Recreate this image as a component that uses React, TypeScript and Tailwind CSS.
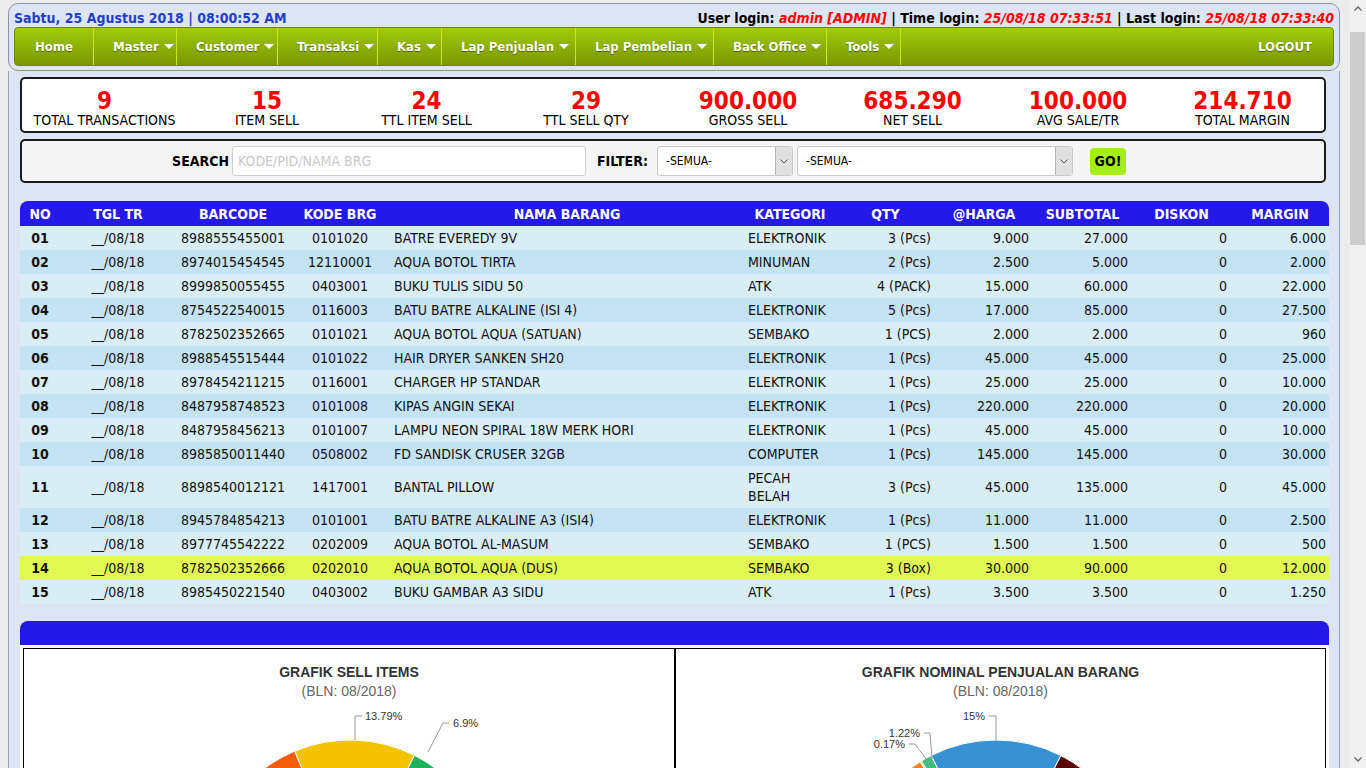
import React from 'react';

const rows: string[][] = [
  ['01', '8988555455001', '0101020', 'BATRE EVEREDY 9V', 'ELEKTRONIK', '3 (Pcs)', '9.000', '27.000', '0', '6.000'],
  ['02', '8974015454545', '12110001', 'AQUA BOTOL TIRTA', 'MINUMAN', '2 (Pcs)', '2.500', '5.000', '0', '2.000'],
  ['03', '8999850055455', '0403001', 'BUKU TULIS SIDU 50', 'ATK', '4 (PACK)', '15.000', '60.000', '0', '22.000'],
  ['04', '8754522540015', '0116003', 'BATU BATRE ALKALINE (ISI 4)', 'ELEKTRONIK', '5 (Pcs)', '17.000', '85.000', '0', '27.500'],
  ['05', '8782502352665', '0101021', 'AQUA BOTOL AQUA (SATUAN)', 'SEMBAKO', '1 (PCS)', '2.000', '2.000', '0', '960'],
  ['06', '8988545515444', '0101022', 'HAIR DRYER SANKEN SH20', 'ELEKTRONIK', '1 (Pcs)', '45.000', '45.000', '0', '25.000'],
  ['07', '8978454211215', '0116001', 'CHARGER HP STANDAR', 'ELEKTRONIK', '1 (Pcs)', '25.000', '25.000', '0', '10.000'],
  ['08', '8487958748523', '0101008', 'KIPAS ANGIN SEKAI', 'ELEKTRONIK', '1 (Pcs)', '220.000', '220.000', '0', '20.000'],
  ['09', '8487958456213', '0101007', 'LAMPU NEON SPIRAL 18W MERK HORI', 'ELEKTRONIK', '1 (Pcs)', '45.000', '45.000', '0', '10.000'],
  ['10', '8985850011440', '0508002', 'FD SANDISK CRUSER 32GB', 'COMPUTER', '1 (Pcs)', '145.000', '145.000', '0', '30.000'],
  ['11', '8898540012121', '1417001', 'BANTAL PILLOW', 'PECAH BELAH', '3 (Pcs)', '45.000', '135.000', '0', '45.000'],
  ['12', '8945784854213', '0101001', 'BATU BATRE ALKALINE A3 (ISI4)', 'ELEKTRONIK', '1 (Pcs)', '11.000', '11.000', '0', '2.500'],
  ['13', '8977745542222', '0202009', 'AQUA BOTOL AL-MASUM', 'SEMBAKO', '1 (PCS)', '1.500', '1.500', '0', '500'],
  ['14', '8782502352666', '0202010', 'AQUA BOTOL AQUA (DUS)', 'SEMBAKO', '3 (Box)', '30.000', '90.000', '0', '12.000'],
  ['15', '8985450221540', '0403002', 'BUKU GAMBAR A3 SIDU', 'ATK', '1 (Pcs)', '3.500', '3.500', '0', '1.250'],
];

const stats = [
  ['9', 'TOTAL TRANSACTIONS'],
  ['15', 'ITEM SELL'],
  ['24', 'TTL ITEM SELL'],
  ['29', 'TTL SELL QTY'],
  ['900.000', 'GROSS SELL'],
  ['685.290', 'NET SELL'],
  ['100.000', 'AVG SALE/TR'],
  ['214.710', 'TOTAL MARGIN'],
];

const menus = [
  { label: 'Master', w: 'w-[83px]' },
  { label: 'Customer', w: 'w-[101px]' },
  { label: 'Transaksi', w: 'w-[100px]' },
  { label: 'Kas', w: 'w-[64px]' },
  { label: 'Lap Penjualan', w: 'w-[134px]' },
  { label: 'Lap Pembelian', w: 'w-[138px]' },
  { label: 'Back Office', w: 'w-[113px]' },
  { label: 'Tools', w: 'w-[74px]' },
];

function Caret() {
  return <span className="ml-[5px] inline-block h-0 w-0 border-x-[5px] border-t-[5px] border-x-transparent border-t-white" />;
}

function Header() {
  return (
    <div className="rounded-[10px] border border-[#8d94a4] bg-[#dde5f4] px-[5px] pt-[6px] pb-[4px]">
      <div className="flex h-[17px] items-center justify-between text-[14px] leading-[17px] font-bold">
        <span className="text-[#1f3fc9]">Sabtu, 25 Agustus 2018 | 08:00:52 AM</span>
        <span>
          User login: <i className="text-[#ff0000]">admin [ADMIN]</i> | Time login:{' '}
          <i className="text-[#ff0000]">25/08/18 07:33:51</i> | Last login:{' '}
          <i className="text-[#ff0000]">25/08/18 07:33:40</i>
        </span>
      </div>
      <nav className="flex h-[39px] items-stretch rounded-[4px] border border-[#6f8800] bg-linear-to-b from-[#a2cb0c] to-[#7b9703] text-[13px] font-bold text-white [text-shadow:0_1px_1px_rgba(0,0,0,0.45)]">
        <a className="flex w-[78px] items-center justify-center">Home</a>
        {menus.map((m) => (
          <a key={m.label} className={`flex ${m.w} items-center border-l border-[#c9e51c] pl-[19px]`}>
            {m.label}
            <Caret />
          </a>
        ))}
        <span className="border-l border-[#c9e51c]" />
        <a className="ml-auto flex items-center pr-[21px]">LOGOUT</a>
      </nav>
    </div>
  );
}

function Stats() {
  return (
    <div className="mr-[2px] grid grid-cols-[165px_160px_159px_160px_164px_165px_166px_1fr] rounded-[5px] border-2 border-[#1b1b1b] bg-white pt-[11px] pb-[3px] text-center">
      {stats.map(([v, l]) => (
        <div key={l}>
          <div className="text-[24px] leading-[22px] font-bold text-[#ff0000]">{v}</div>
          <div className="text-[14px] leading-[16px]">{l}</div>
        </div>
      ))}
    </div>
  );
}

function Select({ w }: { w: string }) {
  return (
    <div className={`flex h-[30px] ${w} items-center overflow-hidden rounded-[3px] border border-[#c8c8c8] bg-white`}>
      <span className="flex-1 pl-[8px] text-[12px]">-SEMUA-</span>
      <span className="flex h-full w-[17px] items-center justify-center border-l border-[#b3b3b3] bg-[#e0e0e0]">
        <svg width="8" height="5" viewBox="0 0 8 5">
          <path d="M0.5 0.5 L4 4 L7.5 0.5" fill="none" stroke="#555" strokeWidth="1" />
        </svg>
      </span>
    </div>
  );
}

function SearchBar() {
  return (
    <div className="mt-[6px] mr-[2px] flex h-[44px] items-center rounded-[5px] border-2 border-[#1b1b1b] bg-[#f5f5f5] pl-[148px]">
      <span className="w-[59px] text-right text-[14px] font-bold">SEARCH</span>
      <input
        className="ml-[3px] h-[30px] w-[354px] rounded-[3px] border border-[#cfcfcf] bg-white px-[5px] text-[14px] outline-none placeholder:text-[#c9c9c9]"
        placeholder="KODE/PID/NAMA BRG"
      />
      <span className="ml-[11px] w-[56px] text-[14px] font-bold">FILTER:</span>
      <div className="ml-[4px]">
        <Select w="w-[136px]" />
      </div>
      <div className="ml-[4px]">
        <Select w="w-[276px]" />
      </div>
      <button className="ml-[17px] h-[27px] w-[36px] rounded-[4px] bg-[#a4ee14] text-[14px] font-bold">GO!</button>
    </div>
  );
}

const heads = ['NO', 'TGL TR', 'BARCODE', 'KODE BRG', 'NAMA BARANG', 'KATEGORI', 'QTY', '@HARGA', 'SUBTOTAL', 'DISKON', 'MARGIN'];

function ItemTable() {
  return (
    <table className="mt-[18px] w-[1309px] table-fixed border-separate border-spacing-0 text-[14px] leading-[18px]">
      <colgroup>
        <col className="w-[40px]" />
        <col className="w-[116px]" />
        <col className="w-[114px]" />
        <col className="w-[100px]" />
        <col className="w-[354px]" />
        <col className="w-[92px]" />
        <col className="w-[99px]" />
        <col className="w-[98px]" />
        <col className="w-[99px]" />
        <col className="w-[99px]" />
        <col className="w-[98px]" />
      </colgroup>
      <thead>
        <tr className="bg-[#2419e8] text-white">
          {heads.map((h, i) => (
            <th
              key={h}
              className={`h-[25px] px-[4px] pt-[1px] text-center font-bold ${i === 0 ? 'rounded-tl-[8px]' : ''} ${i === 10 ? 'rounded-tr-[8px]' : ''}`}
            >
              {h}
            </th>
          ))}
        </tr>
      </thead>
      <tbody>
        {rows.map((r, i) => {
          const bg = r[0] === '14' ? 'bg-[#e2f852]' : i % 2 === 0 ? 'bg-[#d9edf7]' : 'bg-[#c4e3f3]';
          return (
            <tr key={r[0]} className={`${bg} text-[#111]`}>
              <td className="px-[4px] py-[3px] text-center font-bold">{r[0]}</td>
              <td className="px-[4px] py-[3px] text-center">__/08/18</td>
              <td className="px-[4px] py-[3px] text-center">{r[1]}</td>
              <td className="px-[4px] py-[3px] text-center">{r[2]}</td>
              <td className="px-[4px] py-[3px] text-left">{r[3]}</td>
              <td className="px-[4px] py-[3px] text-left">{r[4]}</td>
              <td className="px-[4px] py-[3px] text-right">{r[5]}</td>
              <td className="px-[4px] py-[3px] text-right">{r[6]}</td>
              <td className="px-[4px] py-[3px] text-right">{r[7]}</td>
              <td className="px-[4px] py-[3px] text-right">{r[8]}</td>
              <td className="px-[3px] py-[3px] text-right">{r[9]}</td>
            </tr>
          );
        })}
      </tbody>
    </table>
  );
}

function arc(cx: number, cy: number, r: number, a0: number, a1: number) {
  const pt = (a: number) => [cx + r * Math.sin((a * Math.PI) / 180), cy - r * Math.cos((a * Math.PI) / 180)];
  const [x0, y0] = pt(a0);
  const [x1, y1] = pt(a1);
  const large = a1 - a0 > 180 ? 1 : 0;
  return `M${cx},${cy} L${x0},${y0} A${r},${r} 0 ${large} 1 ${x1},${y1} Z`;
}

type Slice = [number, number, string];

function Pie({ cx, cy, slices }: { cx: number; cy: number; slices: Slice[] }) {
  return (
    <>
      {slices.map(([a0, a1, c], i) => (
        <path key={i} d={arc(cx, cy, 143, a0, a1)} fill={c} stroke="#fff" strokeWidth="1" />
      ))}
    </>
  );
}

const leftSlices: Slice[] = [
  [-22.8, 26.8, '#f3c300'],
  [26.8, 51.6, '#1fb15c'],
  [51.6, 112, '#2e80cf'],
  [112, 178, '#8e44ad'],
  [178, 244, '#16a085'],
  [244, 298, '#c0392b'],
  [298, 337.2, '#f45e0a'],
];

const rightSlices: Slice[] = [
  [-27, 27, '#3891d0'],
  [27, 118, '#5a0000'],
  [118, 190, '#8e44ad'],
  [190, 250, '#2c3e50'],
  [250, 292, '#c0392b'],
  [292, 328, '#f07f2b'],
  [328, 328.6, '#f3c300'],
  [328.6, 333, '#3fbe7e'],
];

function ChartBox({ title, w, children }: { title: string; w: string; children: React.ReactNode }) {
  return (
    <div className={`${w} h-[430px] border border-black bg-white pt-[15px] font-['Liberation_Sans',Arial,sans-serif]`}>
      <div className="text-center text-[14px] leading-[16px] font-bold text-[#333]">{title}</div>
      <div className="mt-[2px] text-center text-[14px] leading-[18px] text-[#666]">(BLN: 08/2018)</div>
      <svg width="100%" height="380" className="block text-[11px]">
        {children}
      </svg>
    </div>
  );
}

function Charts() {
  return (
    <div className="mt-[17px] w-[1309px]">
      <div className="h-[24px] rounded-t-[8px] bg-[#2419e8]" />
      <div className="flex bg-white p-[3px]">
        <ChartBox title="GRAFIK SELL ITEMS" w="w-[652px]">
          <Pie cx={326} cy={183} slices={leftSlices} />
          <path d="M338 16 L331 16 L331 40" fill="none" stroke="#999" strokeWidth="1" />
          <text x="341" y="20" fill="#333">13.79%</text>
          <path d="M425 23 L419 23 L404 52" fill="none" stroke="#999" strokeWidth="1" />
          <text x="429" y="27" fill="#333">6.9%</text>
        </ChartBox>
        <ChartBox title="GRAFIK NOMINAL PENJUALAN BARANG" w="w-[651px]">
          <Pie cx={320} cy={183} slices={rightSlices} />
          <path d="M313 16 L320 16 L320 40" fill="none" stroke="#999" strokeWidth="1" />
          <text x="309" y="20" textAnchor="end" fill="#333">15%</text>
          <path d="M248 33 L254 33 L256 59" fill="none" stroke="#999" strokeWidth="1" />
          <text x="244" y="37" textAnchor="end" fill="#333">1.22%</text>
          <path d="M233 44 L239 44 L253 63" fill="none" stroke="#999" strokeWidth="1" />
          <text x="229" y="48" textAnchor="end" fill="#333">0.17%</text>
        </ChartBox>
      </div>
    </div>
  );
}

// browser scrollbar as seen in the screenshot
function ScrollBar() {
  return (
    <div className="flex w-[17px] shrink-0 flex-col bg-[#f0f0f0]">
      <div className="flex h-[17px] items-center justify-center">
        <svg width="8" height="5" viewBox="0 0 8 5">
          <path d="M0.5 4.5 L4 1 L7.5 4.5" fill="none" stroke="#606060" strokeWidth="1.3" />
        </svg>
      </div>
      <div className="mt-[15px] mr-[1px] ml-[1px] h-[213px] bg-[#cdcdcd]" />
      <div className="flex-1" />
      <div className="flex h-[17px] items-center justify-center">
        <svg width="8" height="5" viewBox="0 0 8 5">
          <path d="M0.5 0.5 L4 4 L7.5 0.5" fill="none" stroke="#606060" strokeWidth="1.3" />
        </svg>
      </div>
    </div>
  );
}

export default function App() {
  return (
    <div className="flex h-screen overflow-hidden bg-[#ececec] font-['DejaVu_Sans_Condensed','DejaVu_Sans',sans-serif] text-black">
      <div className="flex-1 overflow-hidden">
        <div className="ml-[8px] w-[1332px] pt-[3px]">
          <Header />
          <div className="min-h-[2566px] border-x border-[#9aa2b4] bg-[#dde5f4] px-[11px] pt-[6px]">
            <Stats />
            <SearchBar />
            <ItemTable />
            <Charts />
          </div>
        </div>
      </div>
      <ScrollBar />
    </div>
  );
}
